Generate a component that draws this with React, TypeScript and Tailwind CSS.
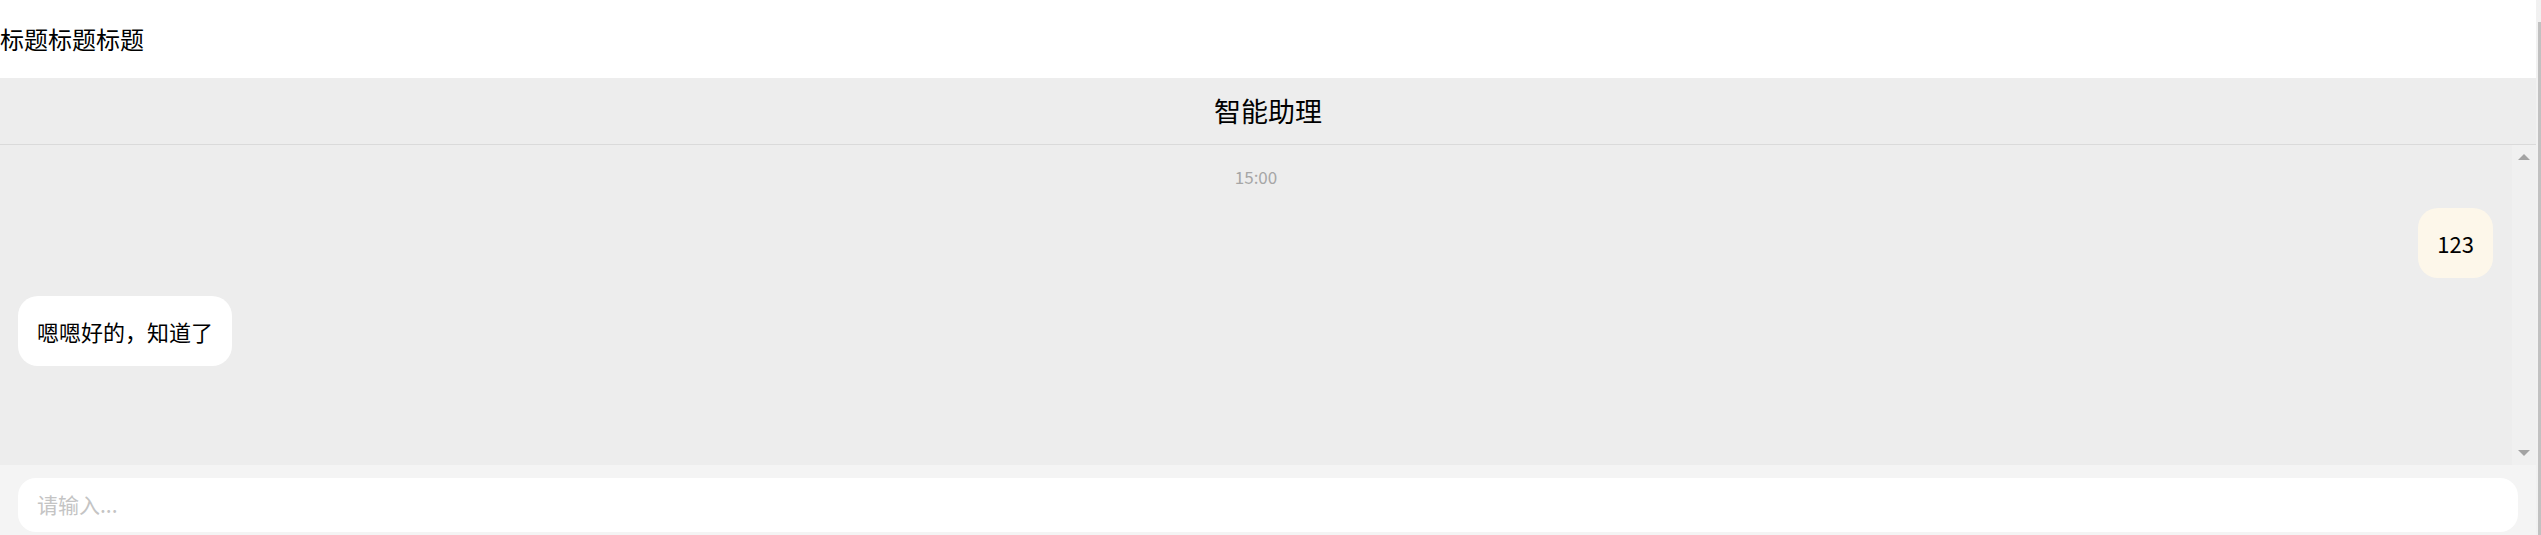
import React from 'react';

const font = "font-['Noto_Sans_CJK_SC','Noto_Sans',sans-serif]";

const ChatScrollbar: React.FC = () => (
  <div className="w-[24px] bg-[#f0f0f0] flex flex-col items-center justify-between py-[9px]">
    <div className="w-0 h-0 border-l-[6px] border-r-[6px] border-b-[6px] border-l-transparent border-r-transparent border-b-[#a3a3a3]" />
    <div className="w-0 h-0 border-l-[6px] border-r-[6px] border-t-[6px] border-l-transparent border-r-transparent border-t-[#a3a3a3]" />
  </div>
);

const App: React.FC = () => {
  return (
    <div className={`w-[2541px] h-[535px] overflow-hidden flex bg-white ${font}`}>
      <div className="w-[2536px] flex flex-col">
        <header className="h-[78px] bg-white flex items-center text-[24px] text-black">
          标题标题标题
        </header>

        <div className="h-[67px] bg-[#ededed] border-b border-[#dadada] flex items-center justify-center text-[27px] text-black">
          智能助理
        </div>

        <div className="h-[320px] bg-[#ededed] flex">
          <div className="flex-1 flex flex-col">
            <div className="mt-[22px] h-[20px] leading-[20px] text-center text-[17px] text-[#a6a6a6]">
              15:00
            </div>
            <div className="mt-[21px] flex justify-end pr-[19px]">
              <div className="h-[70px] px-[19px] flex items-center rounded-[20px] bg-[#fdf7ea] text-[22px] text-black">
                123
              </div>
            </div>
            <div className="mt-[18px] flex pl-[18px]">
              <div className="h-[70px] px-[19px] flex items-center rounded-[20px] bg-white text-[22px] text-black">
                嗯嗯好的，知道了
              </div>
            </div>
          </div>
          <ChatScrollbar />
        </div>

        <div className="flex-1 bg-[#f4f4f4] pt-[13px] pl-[18px] pr-[18px]">
          <div className="h-[54px] rounded-[18px] bg-white flex items-center px-[19px] text-[21px] text-[#c4c4c4]">
            请输入...
          </div>
        </div>
      </div>

      <div className="w-[5px] bg-[#f1f1f1] flex flex-col">
        <div className="ml-[2px] mt-[22px] flex-1 bg-[#c1c1c1]" />
      </div>
    </div>
  );
};

export default App;
